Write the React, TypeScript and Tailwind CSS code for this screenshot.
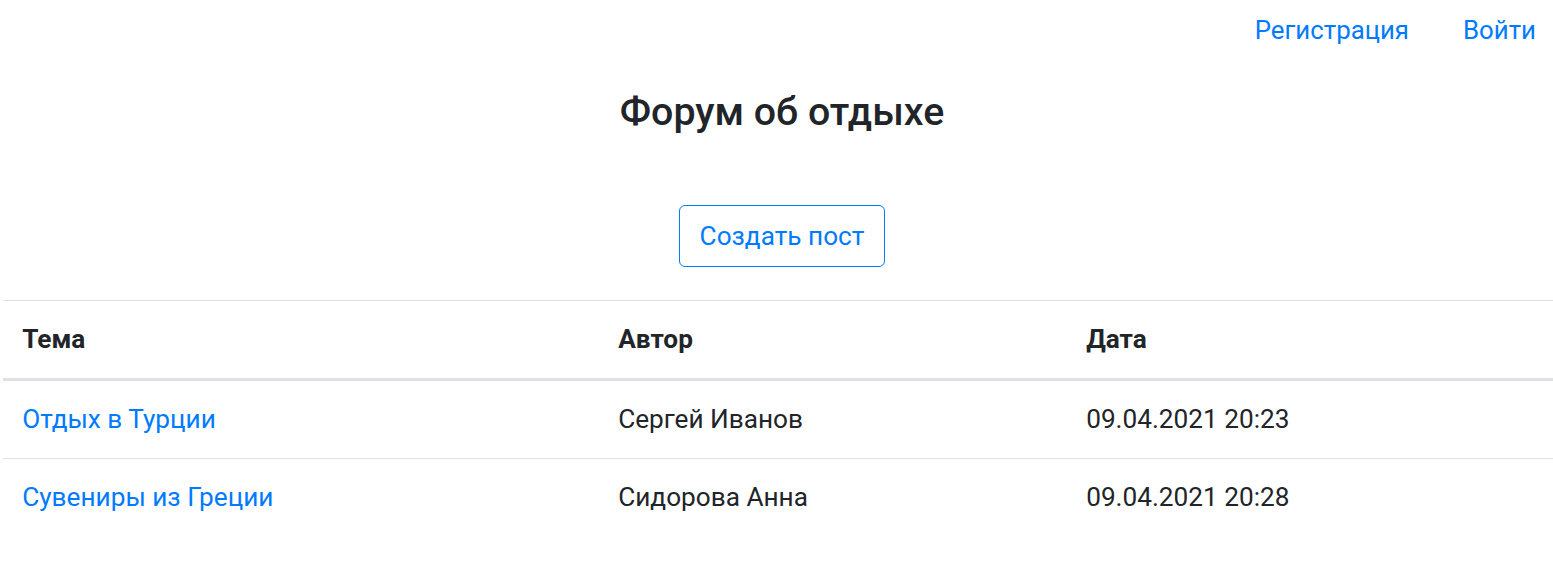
const posts = [
  { title: 'Отдых в Турции', author: 'Сергей Иванов', date: '09.04.2021 20:23' },
  { title: 'Сувениры из Греции', author: 'Сидорова Анна', date: '09.04.2021 20:28' },
];

export default function App() {
  return (
    <div className="min-h-screen bg-white font-['Roboto','Noto_Sans',sans-serif] text-[26.2px] leading-[38.4px] text-[#212529]">
      <nav className="flex h-[60px] items-center justify-end gap-[54px] pr-[17px]">
        <a href="#" className="text-[25.8px] text-[#007bff]">
          Регистрация
        </a>
        <a href="#" className="text-[25.8px] text-[#007bff]">
          Войти
        </a>
      </nav>

      <div className="pl-[11px]">
        <h4 className="mt-[29px] text-center text-[39.3px] font-medium leading-[46px]">Форум об отдыхе</h4>

        <div className="mt-[70px] flex justify-center">
          <button className="rounded-[6px] border border-[#007bff] px-[20px] py-[11px] leading-[38px] text-[#007bff]">
            Создать пост
          </button>
        </div>
      </div>

      <table className="mt-[33px] ml-[3px] w-[1550px] table-fixed border-collapse text-left">
        <colgroup>
          <col className="w-[596px]" />
          <col className="w-[468px]" />
          <col />
        </colgroup>
        <thead>
          <tr>
            <th className="border-t border-b-[3px] border-[#dee2e6] p-[19.2px] font-bold">Тема</th>
            <th className="border-t border-b-[3px] border-[#dee2e6] p-[19.2px] font-bold">Автор</th>
            <th className="border-t border-b-[3px] border-[#dee2e6] p-[19.2px] font-bold">Дата</th>
          </tr>
        </thead>
        <tbody>
          {posts.map((post, i) => (
            <tr key={post.title}>
              <td className={`p-[19.2px] ${i > 0 ? 'border-t border-[#dee2e6]' : ''}`}>
                <a href="#" className="text-[#007bff]">
                  {post.title}
                </a>
              </td>
              <td className={`p-[19.2px] ${i > 0 ? 'border-t border-[#dee2e6]' : ''}`}>{post.author}</td>
              <td className={`p-[19.2px] ${i > 0 ? 'border-t border-[#dee2e6]' : ''}`}>{post.date}</td>
            </tr>
          ))}
        </tbody>
      </table>
    </div>
  );
}
